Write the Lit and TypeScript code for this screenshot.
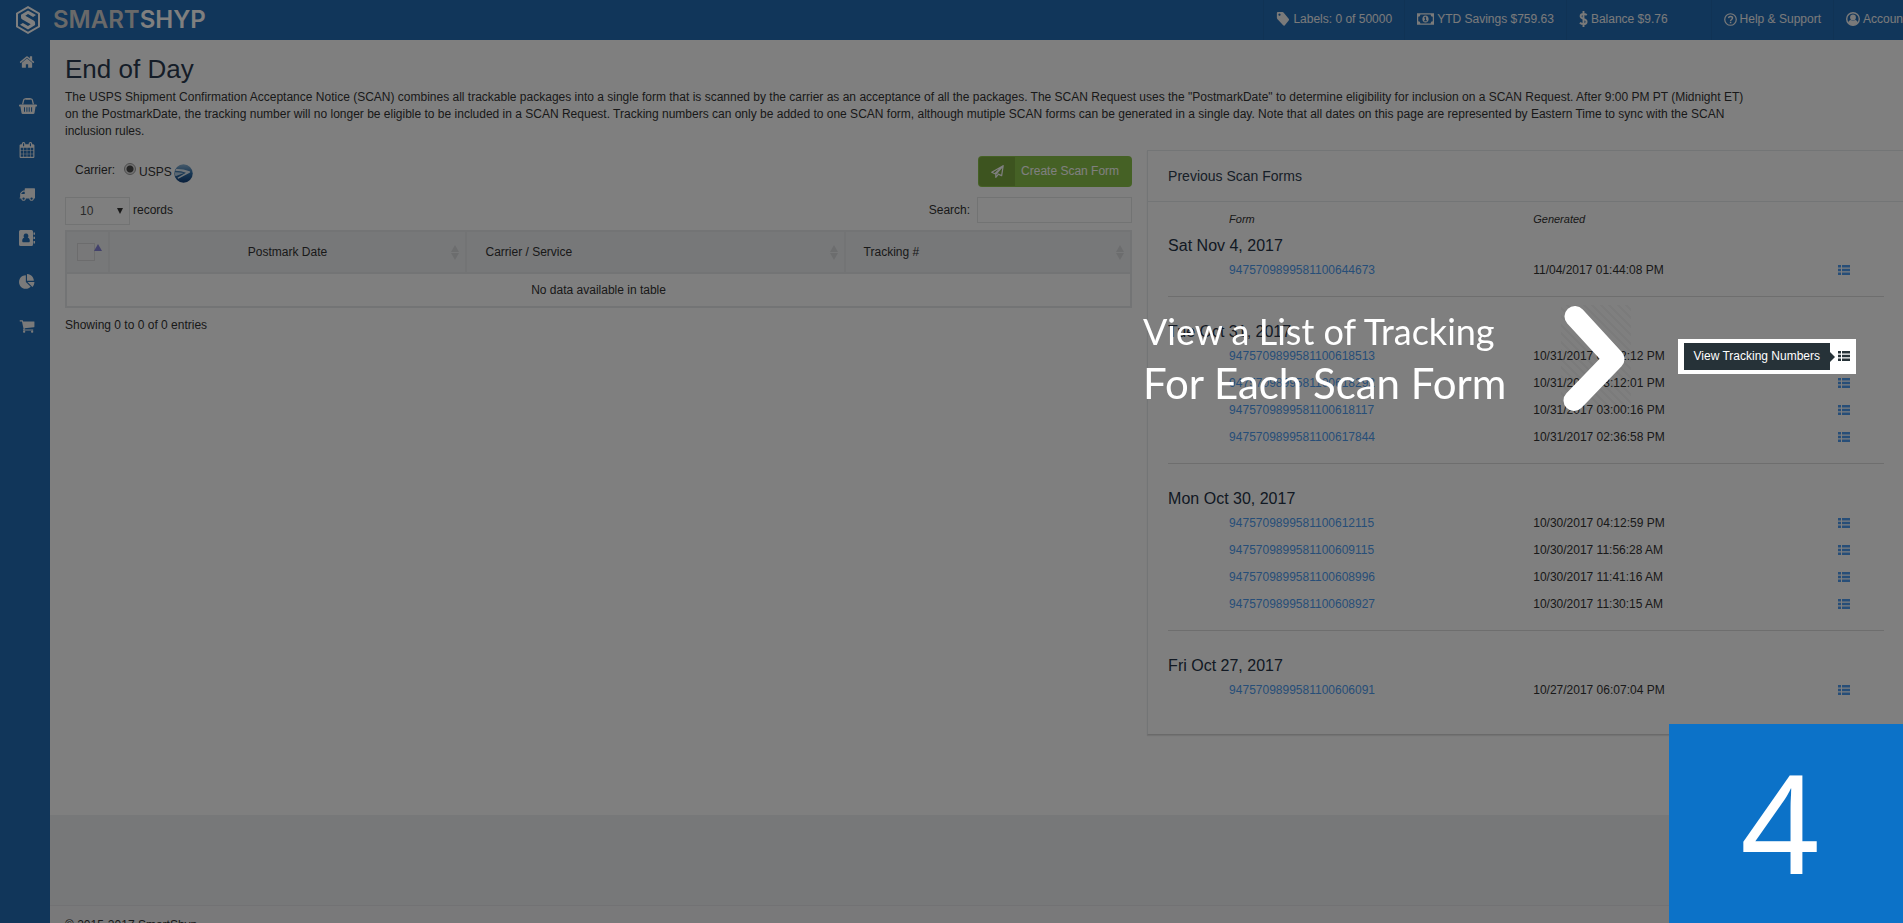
import { LitElement, html, css, svg } from "lit";
import { customElement, property } from "lit/decorators.js";

interface Glyph {
  box: string;
  body: unknown;
}

const GLYPHS: Record<string, Glyph> = {
  home: {
    box: "0 0 1792 1792",
    body: svg`<path d="M1472 992v480q0 26-19 45t-45 19h-384v-384h-256v384h-384q-26 0-45-19t-19-45v-480q0-1 .5-3t.5-3l575-474 575 474q1 2 1 6zm223-69l-62 74q-8 9-21 11h-3q-13 0-21-7l-692-577-692 577q-12 8-24 7-13-2-21-11l-62-74q-8-10-7-23.5t11-21.5l719-599q32-26 76-26t76 26l244 204v-195q0-14 9-23t23-9h192q14 0 23 9t9 23v408l219 182q10 8 11 21.5t-7 23.5z"/>`,
  },
  basket: {
    box: "0 0 18 16",
    body: svg`<path fill-rule="evenodd" d="M.9 6.600h16.200a.9.9 0 0 1 0 1.900h-.5l-1.100 6.400a1.300 1.300 0 0 1-1.300 1.100H3.800a1.300 1.300 0 0 1-1.300-1.100L1.400 8.500H.9a.9.9 0 0 1 0-1.900zM5 9.200v4.600h1V9.200zm2.400 0v4.600h1V9.200zm2.300 0v4.600h1V9.200zm2.400 0v4.600h1V9.200z"/><path d="M3.600 6.400L4.700 1.900Q5 .8 6.200.8h5.600q1.200 0 1.500 1.100l1.100 4.500" fill="none" stroke="currentColor" stroke-width="1.300"/><path d="M6.600 0h4.800v1.600H6.600z"/>`,
  },
  calendar: {
    box: "0 0 1792 1792",
    body: svg`<path d="M192 1664h288v-288h-288v288zm352 0h320v-288h-320v288zm-352-352h288v-320h-288v320zm352 0h320v-320h-320v320zm-352-384h288v-288h-288v288zm736 736h320v-288h-320v288zm-384-736h320v-288h-320v288zm768 736h288v-288h-288v288zm-384-352h320v-320h-320v320zm-352-864v-288q0-13-9.500-22.500t-22.500-9.500h-64q-13 0-22.500 9.500t-9.500 22.500v288q0 13 9.500 22.500t22.500 9.500h64q13 0 22.500-9.500t9.500-22.500zm736 864h288v-320h-288v320zm-384-384h320v-288h-320v288zm384 0h288v-288h-288v288zm32-480v-288q0-13-9.500-22.500t-22.500-9.500h-64q-13 0-22.500 9.500t-9.500 22.500v288q0 13 9.500 22.500t22.500 9.500h64q13 0 22.500-9.500t9.500-22.500zm384-64v1280q0 52-38 90t-90 38h-1408q-52 0-90-38t-38-90v-1280q0-52 38-90t90-38h128v-96q0-66 47-113t113-47h64q66 0 113 47t47 113v96h384v-96q0-66 47-113t113-47h64q66 0 113 47t47 113v96h128q52 0 90 38t38 90z"/>`,
  },
  truck: {
    box: "0 0 1792 1792",
    body: svg`<path d="M640 1408q0-52-38-90t-90-38-90 38-38 90 38 90 90 38 90-38 38-90zm-384-512h384v-256h-158q-13 0-22 9l-195 195q-9 9-9 22v30zm1280 512q0-52-38-90t-90-38-90 38-38 90 38 90 90 38 90-38 38-90zm256-1088v1024q0 15-4 26.500t-13.500 18.500-16.500 11.500-23.500 6-22.500 2-25.500 0-22.500-.5q0 106-75 181t-181 75-181-75-75-181h-384q0 106-75 181t-181 75-181-75-75-181h-64q-3 0-22.500.5t-25.500 0-22.500-2-23.500-6-16.500-11.500-13.500-18.500-4-26.500q0-26 19-45t45-19v-320q0-8-.5-35t0-38 2.500-34.500 6.500-37 14-30.500 22.500-30l198-198q19-19 50.500-32t58.500-13h160v-192q0-26 19-45t45-19h1024q26 0 45 19t19 45z"/>`,
  },
  contacts: {
    box: "0 0 16 16",
    body: svg`<path fill-rule="evenodd" d="M1.500 0h11A1.500 1.500 0 0 1 14 1.500v13a1.500 1.500 0 0 1-1.500 1.500h-11A1.500 1.500 0 0 1 0 14.500v-13A1.500 1.500 0 0 1 1.500 0zM7 3.400a2.400 2.400 0 0 0-1.700 4.100C3.900 7.900 3.200 9.200 3.200 11c0 .8.500 1.300 1.200 1.300h5.200c.7 0 1.200-.5 1.200-1.300 0-1.800-.7-3.100-2.100-3.500A2.400 2.400 0 0 0 7 3.400z"/><path d="M14.500 2.500H16v2.300h-1.500zM14.500 6.800H16v2.300h-1.500zM14.500 11.100H16v2.300h-1.500z"/>`,
  },
  pie: {
    box: "0 0 1792 1792",
    body: svg`<path d="M768 890l546 546q-106 108-247.500 168t-298.500 60q-209 0-385.500-103t-279.500-279.500-103-385.500 103-385.500 279.500-279.500 385.500-103v762zm187 6h773q0 157-60 298.500t-168 247.500zm709-128h-768v-768q209 0 385.500 103t279.500 279.500 103 385.500z"/>`,
  },
  cart: {
    box: "0 0 1792 1792",
    body: svg`<path d="M704 1536q0 52-38 90t-90 38-90-38-38-90 38-90 90-38 90 38 38 90zm896 0q0 52-38 90t-90 38-90-38-38-90 38-90 90-38 90 38 38 90zm128-1088v512q0 24-16.500 42.500t-40.500 21.500l-1044 122q13 60 13 70 0 16-24 64h920q26 0 45 19t19 45-19 45-45 19h-1024q-26 0-45-19t-19-45q0-11 8-31.500t16-36 21.500-40 15.500-29.500l-177-823h-204q-26 0-45-19t-19-45 19-45 45-19h256q16 0 28.500 6.500t19.500 15.500 13 24.500 8 26 5.500 29.500 4.500 26h1201q26 0 45 19t19 45z"/>`,
  },
  tag: {
    box: "0 0 14 16",
    body: svg`<path fill-rule="evenodd" d="M1.200 0h5.300q.6 0 1.100.5l5.900 7.200q.8 1 0 1.900l-4.600 5.700q-.8.9-1.700-.1L.5 8Q0 7.400 0 6.700V1.200Q0 0 1.200 0zM3 1.700a1.200 1.300 0 1 0 .01 0z"/>`,
  },
  money: {
    box: "0 0 18 12",
    body: svg`<path fill-rule="evenodd" d="M0 0h18v12H0zM3.600 1.300A2.300 2.300 0 0 1 1.300 3.600v4.800a2.300 2.300 0 0 1 2.300 2.300h10.800a2.300 2.300 0 0 1 2.300-2.300V3.600a2.300 2.300 0 0 1-2.300-2.300z"/><path fill-rule="evenodd" d="M9 2.200c2 0 3.300 1.700 3.300 3.800S11 9.800 9 9.800 5.700 8.100 5.700 6 7 2.200 9 2.200zM8.700 3.700L7.400 4.800l.5.600.5-.3v2.300h-.9v.9h3v-.9h-.9V3.700z"/>`,
  },
  dollar: {
    box: "0 0 9 16",
    body: svg`<path d="M4.500 0v16M7.800 4.100C6.800 3.300 5.700 3 4.500 3 2.800 3 1.600 3.800 1.600 5.200c0 3.200 6 2.100 6 5.500 0 1.600-1.300 2.400-3.100 2.400-1.400 0-2.600-.5-3.600-1.400" fill="none" stroke="currentColor" stroke-width="1.900"/>`,
  },
  help: {
    box: "0 0 14 14",
    body: svg`<circle cx="7" cy="7" r="6.200" fill="none" stroke="currentColor" stroke-width="1.300"/><path d="M4.900 5.500C5 4.300 5.900 3.700 7 3.700s2.200.7 2.200 1.800C9.200 6.900 7.100 7 7.100 8.500" fill="none" stroke="currentColor" stroke-width="1.500"/><path d="M6.300 9.400h1.600V11H6.300z"/>`,
  },
  user: {
    box: "0 0 16 16",
    body: svg`<circle cx="8" cy="8" r="7.200" fill="none" stroke="currentColor" stroke-width="1.600"/><circle cx="8" cy="6.200" r="3.300"/><path d="M2.400 12.600c.3-2.200 1.500-3.400 3.200-3.600q2.400 1.500 4.800 0c1.700.2 2.900 1.400 3.200 3.600Q11.400 15.400 8 15.400t-5.600-2.800z"/>`,
  },
  plane: {
    box: "0 0 16 16",
    body: svg`<path d="M15 .9L.9 9l3.800 1.700L15 .9l-1.900 12.200-5-2.200M15 .9L5.900 11.600v3.500l2.600-2.900" fill="none" stroke="currentColor" stroke-width="1.500" stroke-linejoin="round"/>`,
  },
  list: {
    box: "0 0 12 10",
    body: svg`<path d="M0 0h3v2.600H0zM4 0h8v2.600H4zM0 3.700h3v2.600H0zM4 3.700h8v2.600H4zM0 7.400h3V10H0zM4 7.400h8V10H4z"/>`,
  },
  brand: {
    box: "0 0 26 28",
    body: svg`<path d="M13 1.200l11 6.300v13L13 26.800 2 20.500v-13z" fill="none" stroke="currentColor" stroke-width="2"/><path d="M13 4.600l8 4.500-2.900 1.800L13 8.100 10.300 9.700l8.300 4.800q1.500.9 1.500 2.600v1.800L13 23.400l-8-4.600 2.900-1.700L13 19.900l2.700-1.600-8.300-4.700Q6 12.800 6 11.200V8.700z"/>`,
  },
};

@customElement("app-icon")
export class AppIcon extends LitElement {
  @property() name = "home";

  static styles = css`
    :host {
      display: inline-block;
      width: 16px;
      height: 16px;
      flex: none;
    }
    .glyph {
      display: block;
      width: 100%;
      height: 100%;
      fill: currentColor;
    }
  `;

  render() {
    const g = GLYPHS[this.name];
    return html`<svg class="glyph" viewBox=${g.box} aria-hidden="true">${g.body}</svg>`;
  }
}

interface ScanForm {
  id: string;
  generated: string;
  active?: boolean;
}

interface ScanDay {
  date: string;
  forms: ScanForm[];
}

const DAYS: ScanDay[] = [
  {
    date: "Sat Nov 4, 2017",
    forms: [{ id: "9475709899581100644673", generated: "11/04/2017 01:44:08 PM" }],
  },
  {
    date: "Tue Oct 31, 2017",
    forms: [
      { id: "9475709899581100618513", generated: "10/31/2017 03:22:12 PM", active: true },
      { id: "9475709899581100618292", generated: "10/31/2017 03:12:01 PM" },
      { id: "9475709899581100618117", generated: "10/31/2017 03:00:16 PM" },
      { id: "9475709899581100617844", generated: "10/31/2017 02:36:58 PM" },
    ],
  },
  {
    date: "Mon Oct 30, 2017",
    forms: [
      { id: "9475709899581100612115", generated: "10/30/2017 04:12:59 PM" },
      { id: "9475709899581100609115", generated: "10/30/2017 11:56:28 AM" },
      { id: "9475709899581100608996", generated: "10/30/2017 11:41:16 AM" },
      { id: "9475709899581100608927", generated: "10/30/2017 11:30:15 AM" },
    ],
  },
  {
    date: "Fri Oct 27, 2017",
    forms: [{ id: "9475709899581100606091", generated: "10/27/2017 06:07:04 PM" }],
  },
];

const MENU = [
  ["home", "Home"],
  ["basket", "Orders"],
  ["calendar", "End of Day"],
  ["truck", "Shipments"],
  ["contacts", "Contacts"],
  ["pie", "Reports"],
  ["cart", "Store"],
];

@customElement("scan-history")
export class ScanHistory extends LitElement {
  static styles = css`
    :host {
      display: block;
      background: #fff;
      border: 1px solid #e7eaec;
      border-right: 0;
      border-bottom: 1px solid #d4d4d4;
      box-shadow: 0 1px 1px #e6e6e6;
    }
    .title {
      margin: 0;
      padding: 0 20px;
      border-bottom: 1px solid #e7eaec;
      font-size: 14px;
      font-weight: 400;
      line-height: 50px;
      color: #2f4050;
    }
    .body {
      padding: 0 19px 30px 20px;
    }
    .forms {
      width: 100%;
      table-layout: fixed;
      border-collapse: separate;
      border-spacing: 0;
      text-align: left;
      line-height: 27px;
    }
    .forms td,
    .forms th {
      padding: 0;
      font-weight: 400;
    }
    .forms .form {
      width: 51%;
      padding-left: 61px;
      box-sizing: border-box;
    }
    .forms .action {
      width: 46px;
      line-height: 0;
      vertical-align: top;
    }
    .forms .head {
      overflow: hidden;
      height: 31px;
      font-size: 11px;
      font-style: italic;
      line-height: 34px;
    }
    .forms .day {
      padding-top: 24px;
      font-size: 16px;
      line-height: 22px;
      color: #253346;
    }
    .forms .first .day {
      padding-top: 2px;
    }
    .forms .ruled tr:last-child td {
      padding-bottom: 12px;
      border-bottom: 1px solid #dcdcdc;
    }
    .number {
      color: #4e9cf0;
      text-decoration: none;
    }
    .view {
      display: inline-flex;
      align-items: center;
      height: 25px;
      padding: 0;
      border: 0;
      background: none;
      color: #4e9cf0;
      cursor: pointer;
    }
    .view app-icon {
      width: 12px;
      height: 10px;
    }
    .spot {
      position: relative;
      display: inline-block;
      height: 27px;
    }
    .popup {
      position: absolute;
      z-index: 20;
      top: -4px;
      right: -6px;
      display: flex;
      align-items: flex-start;
      gap: 8px;
      padding: 4px 6px;
      background: #fff;
    }
    .popup .view {
      color: #263238;
    }
    .tip {
      position: relative;
      padding: 0 10px;
      background: #263238;
      color: #fff;
      font-size: 12px;
      line-height: 27px;
      white-space: nowrap;
    }
    .tip::after {
      content: "";
      position: absolute;
      left: 100%;
      top: 50%;
      margin-top: -5px;
      border: 5px solid transparent;
      border-left-color: #263238;
      border-right: 0;
    }
  `;

  private row(form: ScanForm) {
    const button = html`<button class="view" aria-label="View Tracking Numbers">
      <app-icon name="list"></app-icon>
    </button>`;
    return html`<tr>
      <td class="form"><a class="number" href="#${form.id}">${form.id}</a></td>
      <td>${form.generated}</td>
      <td class="action">
        ${form.active
          ? html`<div class="spot">
              ${button}
              <div class="popup"><span class="tip" role="tooltip">View Tracking Numbers</span>${button}</div>
            </div>`
          : button}
      </td>
    </tr>`;
  }

  render() {
    return html`
      <h2 class="title">Previous Scan Forms</h2>
      <div class="body">
        <table class="forms">
          <thead>
            <tr>
              <th class="form"><div class="head">Form</div></th>
              <th><div class="head">Generated</div></th>
              <th class="action"></th>
            </tr>
          </thead>
          ${DAYS.map(
            (day, i) => html`<tbody
              class="${i === 0 ? "first" : ""} ${i < DAYS.length - 1 ? "ruled" : ""}"
            >
              <tr>
                <th class="day" colspan="3" scope="rowgroup">${day.date}</th>
              </tr>
              ${day.forms.map((f) => this.row(f))}
            </tbody>`,
          )}
        </table>
      </div>
    `;
  }
}

@customElement("package-list")
export class PackageList extends LitElement {
  static styles = css`
    :host {
      display: block;
      padding-top: 6px;
    }
    .bar {
      display: flex;
      justify-content: space-between;
      align-items: center;
    }
    .carrier {
      display: flex;
      align-items: center;
      height: 31px;
      padding-left: 10px;
    }
    .carrier .label {
      width: 49px;
      padding-bottom: 3px;
    }
    .carrier .name {
      padding-top: 1px;
    }
    .carrier .radio {
      width: 12px;
      height: 12px;
      margin: 0 3px 5px 0;
      appearance: none;
      border: 1px solid #9a9a9a;
      border-radius: 50%;
      background: radial-gradient(circle, #4a4a4a 0 3px, #e4e4e4 4px);
    }
    .usps {
      width: 19px;
      height: 19px;
      margin: 4px 0 0 2px;
    }
    .create {
      display: flex;
      align-items: stretch;
      height: 31px;
      padding: 1px;
      border: 0;
      border-radius: 4px;
      background: #8bc34a;
      color: #fff;
      font: inherit;
      line-height: 29px;
      cursor: pointer;
    }
    .create .mark {
      display: flex;
      align-items: center;
      justify-content: center;
      width: 36px;
      border-radius: 3px 0 0 3px;
      background: #7ba83f;
    }
    .create .mark app-icon {
      width: 13px;
      height: 13px;
    }
    .create .text {
      padding: 0 12px 0 6px;
    }
    .filters {
      align-items: flex-start;
      height: 33px;
      margin-top: 10px;
    }
    .length,
    .search {
      display: flex;
      line-height: 26px;
    }
    .pick {
      position: relative;
      margin-right: 3px;
    }
    .pick select {
      display: block;
      box-sizing: border-box;
      width: 65px;
      height: 28px;
      padding: 0 14px;
      appearance: none;
      border: 1px solid #e5e6e7;
      border-radius: 0;
      background: #fff;
      color: #555;
      font: inherit;
    }
    .pick::after {
      content: "";
      position: absolute;
      right: 7px;
      top: 11px;
      border: 3px solid transparent;
      border-top: 6px solid #333;
      border-bottom: 0;
    }
    .search input {
      box-sizing: border-box;
      width: 155px;
      height: 26px;
      margin-left: 7px;
      padding: 0 8px;
      border: 1px solid #e5e6e7;
      background: #fff;
      font: inherit;
    }
    .grid {
      width: 100%;
      table-layout: fixed;
      border: 1px solid #e7e8ea;
      border-spacing: 0;
    }
    .grid th,
    .grid td {
      box-sizing: border-box;
      border: 1px solid #e7e8ea;
      padding: 0 18px;
      font-weight: 400;
    }
    .grid th {
      height: 42px;
      background: #eef0f3;
      text-align: left;
    }
    .grid td {
      height: 34px;
      text-align: center;
    }
    .grid .check {
      width: 4%;
      padding: 0 0 0 10px;
    }
    .grid .sortable {
      padding-right: 6px;
    }
    .grid .date {
      width: 33.6%;
      padding-left: 14px;
      text-align: center;
    }
    .grid .service {
      width: 35.5%;
    }
    .cell {
      display: flex;
      align-items: center;
    }
    .cell .name {
      flex: 1;
    }
    .box {
      appearance: none;
      width: 18px;
      height: 18px;
      margin: 0;
      border: 1px solid #d8d8da;
      background: #f0f1f3;
    }
    .up {
      margin: -9px 0 0 -1px;
      border: 4px solid transparent;
      border-bottom: 7px solid #8784d8;
      border-top: 0;
    }
    .sort {
      width: 8px;
      height: 15px;
      fill: #d9dadc;
    }
    .info {
      margin-top: 9px;
      line-height: 17px;
    }
  `;

  private sort() {
    return html`<svg class="sort" viewBox="0 0 8 15" aria-hidden="true">
      <path d="M4 0l4 7H0zM4 15L0 8h8z" />
    </svg>`;
  }

  render() {
    return html`
      <div class="bar">
        <div class="carrier">
          <span class="label">Carrier:</span>
          <input class="radio" id="usps" type="radio" name="carrier" checked />
          <label class="name" for="usps">USPS</label>
          <svg class="usps" viewBox="0 0 20 20" aria-hidden="true">
            <defs>
              <linearGradient id="globe" x1="0" y1="0" x2="0" y2="1">
                <stop offset="0" stop-color="#8db4d4" />
                <stop offset=".5" stop-color="#2f6ea8" />
                <stop offset="1" stop-color="#123f78" />
              </linearGradient>
            </defs>
            <circle cx="10" cy="10" r="9.700" fill="url(#globe)" />
            <path d="M2.300 5.200Q9 4.800 16.500 7.700q1.200.7 0 1.500L4.500 15.600l-.9-1.100 9-5.200Q8 7.300 1.300 7.200z" fill="#e3edf5" />
            <path d="M.6 8.600Q6 8.400 10.500 9.500L1.600 13Q.5 11 .6 8.600z" fill="#b9d0e4" />
          </svg>
        </div>
        <button class="create">
          <span class="mark"><app-icon name="plane"></app-icon></span>
          <span class="text">Create Scan Form</span>
        </button>
      </div>
      <div class="bar filters">
        <label class="length">
          <span class="pick"><select><option>10</option><option>25</option><option>50</option></select></span>
          records
        </label>
        <label class="search">Search:<input type="text" /></label>
      </div>
      <table class="grid">
        <thead>
          <tr>
            <th class="check">
              <div class="cell"><input class="box" type="checkbox" aria-label="Select all" /><span class="up"></span></div>
            </th>
            <th class="sortable date"><div class="cell"><span class="name">Postmark Date</span>${this.sort()}</div></th>
            <th class="sortable service"><div class="cell"><span class="name">Carrier / Service</span>${this.sort()}</div></th>
            <th class="sortable"><div class="cell"><span class="name">Tracking #</span>${this.sort()}</div></th>
          </tr>
        </thead>
        <tbody>
          <tr>
            <td colspan="4">No data available in table</td>
          </tr>
        </tbody>
      </table>
      <div class="info">Showing 0 to 0 of 0 entries</div>
    `;
  }
}

@customElement("app-root")
export class AppRoot extends LitElement {
  static styles = css`
    :host {
      position: relative;
      display: flex;
      flex-direction: column;
      height: 100vh;
      overflow: hidden;
      background: #eef0f3;
      color: #333;
      font: 12px/17px "Liberation Sans", Arial, sans-serif;
    }
    .top {
      display: flex;
      flex: none;
      height: 40px;
      background: #226cb4;
      color: #f4f4f4;
    }
    .brand {
      display: flex;
      align-items: center;
      gap: 12px;
      height: 39px;
      padding-left: 15px;
      color: #fff;
      text-decoration: none;
      font: 600 24px/39px Inter, "Liberation Sans", sans-serif;
    }
    .brand app-icon {
      width: 26px;
      height: 28px;
    }
    .brand .soft {
      color: #d2d2d2;
    }
    .status {
      display: flex;
      margin-left: auto;
    }
    .status .item {
      display: flex;
      align-items: center;
      gap: 3px;
      box-sizing: border-box;
      padding: 0 12px 2px;
      border-left: 1px solid #2067ab;
      color: inherit;
      text-decoration: none;
      white-space: nowrap;
    }
    .status .wide {
      padding-right: 43px;
    }
    .status .cut {
      width: 70px;
      padding-right: 0;
      overflow: hidden;
    }
    .status .tag,
    .status .user {
      width: 14px;
      height: 14px;
    }
    .status .money {
      width: 17px;
      height: 12px;
    }
    .status .dollar {
      width: 9px;
      height: 16px;
    }
    .status .help {
      width: 13px;
      height: 13px;
    }
    .shell {
      display: flex;
      flex: 1;
      min-height: 0;
    }
    .side {
      display: flex;
      flex-direction: column;
      flex: none;
      width: 50px;
      background: #226cb4;
      color: #f4f4f4;
    }
    .side a {
      display: flex;
      align-items: center;
      height: 44px;
      padding-left: 19px;
      color: inherit;
    }
    .side .basket {
      width: 18px;
    }
    .main {
      flex: 1;
      min-width: 0;
    }
    .page {
      box-sizing: border-box;
      min-height: calc(100vh - 148px);
      padding: 14px 0 30px 15px;
      background: #fff;
    }
    h1 {
      margin: 0;
      font-size: 26px;
      font-weight: 400;
      line-height: 30px;
      color: #2b3b50;
    }
    .lead {
      margin: 5px 150px 10px 0;
    }
    .columns {
      display: grid;
      grid-template-columns: 24fr 17fr;
      gap: 15px;
      align-items: start;
    }
    .foot {
      margin-top: 90px;
      padding: 11px 15px;
      border-top: 1px solid #e4e5e8;
      background: #f2f3f5;
    }
    .shade {
      position: fixed;
      z-index: 10;
      inset: 0;
      background: rgba(0, 0, 0, 0.5);
      pointer-events: none;
    }
    .note {
      position: absolute;
      z-index: 15;
      top: 305px;
      right: 272px;
      display: flex;
      color: #fff;
      font: 36px/52px Lato, "Noto Sans", sans-serif;
      white-space: nowrap;
      pointer-events: none;
    }
    .note .words {
      width: 418px;
    }
    .note .large {
      font-size: 42px;
    }
    .note .arrow {
      width: 70px;
      height: 106px;
      background: repeating-linear-gradient(
        45deg,
        rgba(0, 0, 0, 0.03) 0 2px,
        transparent 2px 6px
      );
    }
    .step {
      position: absolute;
      z-index: 15;
      right: 0;
      bottom: 0;
      box-sizing: border-box;
      width: 234px;
      height: 199px;
      padding-right: 12px;
      background: #0c72c8;
      color: #fff;
      font: 138px/193px "Noto Sans", sans-serif;
      text-align: center;
    }
  `;

  render() {
    return html`
      <header class="top">
        <a class="brand" href="#home">
          <app-icon name="brand"></app-icon>
          <span><span class="soft">SMART</span>SHYP</span>
        </a>
        <nav class="status" aria-label="Account status">
          <a class="item" href="#labels"><app-icon class="tag" name="tag"></app-icon>Labels: 0 of 50000</a>
          <a class="item" href="#savings"><app-icon class="money" name="money"></app-icon>YTD Savings $759.63</a>
          <a class="item wide" href="#balance"><app-icon class="dollar" name="dollar"></app-icon>Balance $9.76</a>
          <a class="item" href="#help"><app-icon class="help" name="help"></app-icon>Help &amp; Support</a>
          <a class="item cut" href="#account"><app-icon class="user" name="user"></app-icon>Account</a>
        </nav>
      </header>
      <div class="shell">
        <nav class="side" aria-label="Main">
          ${MENU.map(
            ([icon, label]) =>
              html`<a href="#${icon}" aria-label=${label}
                ><app-icon class=${icon} name=${icon}></app-icon
              ></a>`,
          )}
        </nav>
        <div class="main">
          <main class="page">
            <h1>End of Day</h1>
            <p class="lead">
              The USPS Shipment Confirmation Acceptance Notice (SCAN) combines all trackable packages
              into a single form that is scanned by the carrier as an acceptance of all the packages.
              The SCAN Request uses the "PostmarkDate" to determine eligibility for inclusion on a
              SCAN Request. After 9:00 PM PT (Midnight ET) on the PostmarkDate, the tracking number
              will no longer be eligible to be included in a SCAN Request. Tracking numbers can only
              be added to one SCAN form, although mutiple SCAN forms can be generated in a single day.
              Note that all dates on this page are represented by Eastern Time to sync with the SCAN
              inclusion rules.
            </p>
            <div class="columns">
              <package-list></package-list>
              <scan-history></scan-history>
            </div>
          </main>
          <footer class="foot">© 2015-2017 SmartShyp</footer>
        </div>
      </div>
      <div class="shade"></div>
      <div class="note">
        <div class="words">
          <div>View a List of Tracking</div>
          <div class="large">For Each Scan Form</div>
        </div>
        <svg class="arrow" viewBox="0 0 70 106" aria-hidden="true">
          <path
            d="M14 11.500L53 54 13 95.500"
            fill="none"
            stroke="#fff"
            stroke-width="21"
            stroke-linecap="round"
            stroke-linejoin="round"
          />
        </svg>
      </div>
      <div class="step">4</div>
    `;
  }
}
